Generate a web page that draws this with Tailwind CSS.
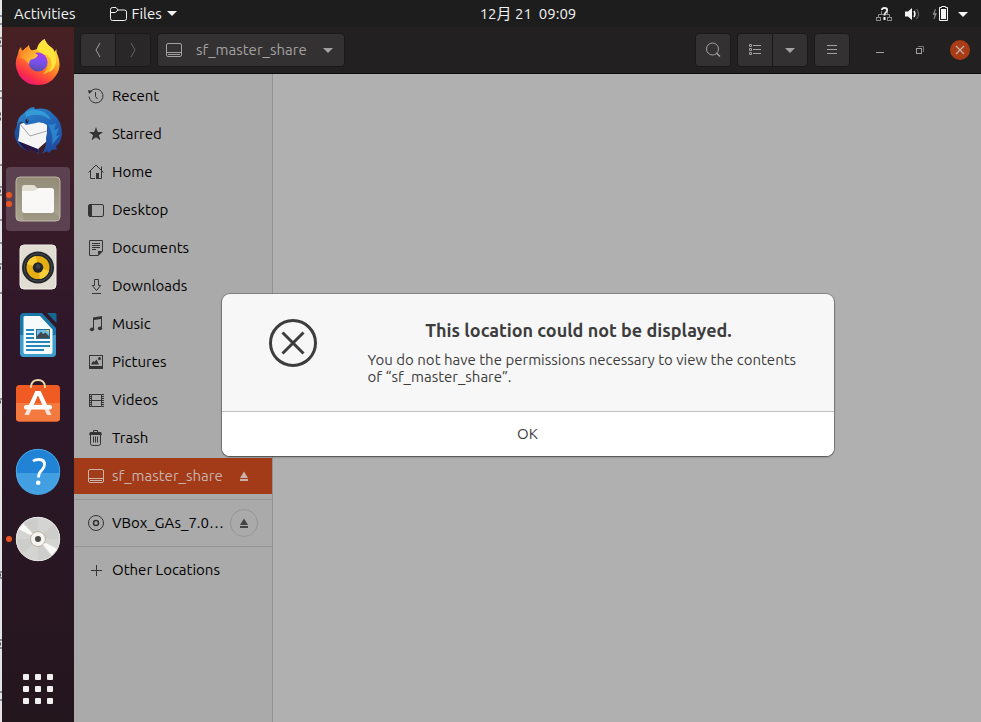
<!DOCTYPE html>
<html lang="en">
<head>
<meta charset="utf-8">
<meta name="viewport" content="width=device-width, initial-scale=1">
<title>Files</title>
<script src="https://cdn.jsdelivr.net/npm/@tailwindcss/browser@4"></script>
</head>
<body class="flex h-screen min-h-[722px] overflow-hidden bg-[#1d1d1d] font-['Ubuntu','Noto_Sans','Noto_Sans_CJK_SC',sans-serif] text-[15px] leading-5">

<!-- edge of the page behind the desktop -->
<svg class="h-full w-[2px] shrink-0 bg-[#e4e4e4]" viewBox="0 0 2 722" preserveAspectRatio="none" aria-hidden="true">
  <path stroke="#8d8d96" stroke-width="2" d="M0 16h2M0 24h2M0 38h2M0 46h2M0 91h2M0 98h2M0 165h2M0 187h2M0 195h2M0 220h2M0 243h2M0 264h2M0 293h2M0 399h2M0 572h2M0 578h2M0 640h2M0 648h2M0 692h2M0 700h2"/>
  <path stroke="#55555f" stroke-width="3" d="M0 42h1M0 114h1M0 119h1M0 191h1M0 268h1M0 402h1M0 575h1M0 644h1"/>
</svg>

<div class="flex min-w-0 flex-1 flex-col">

  <header class="grid h-[27px] shrink-0 grid-cols-[1fr_auto_1fr] items-center bg-[#1d1d1d] pl-3 pr-[13px] text-[#f2f2f2]">
    <div class="flex items-center gap-[34px]">
      <button type="button">Activities</button>
      <button type="button" class="flex items-center gap-[5px]">
        <svg class="h-4 w-[17px]" viewBox="0 0 17 16" fill="none" stroke="currentColor" aria-hidden="true"><path d="M.5 12.500V3.500Q.5 1.500 2.500 1.500H6L8 4H14.500Q16.500 4 16.500 6V12.500Q16.500 14.500 14.500 14.500H2.500Q.5 14.500 .5 12.500ZM1 6.500H5.500L8 4"/></svg>
        <span>Files</span>
        <svg class="h-[5px] w-[10px]" viewBox="0 0 10 5" fill="currentColor" aria-hidden="true"><path d="M0 0H10L5 5Z"/></svg>
      </button>
    </div>
    <time class="whitespace-pre pl-[74px]">12月 21  09:09</time>
    <button type="button" class="flex items-center justify-end" aria-label="System menu">
      <svg class="h-[18px] w-[92px]" viewBox="0 0 92 18" fill="none" aria-hidden="true">
        <g stroke="#8c8c8c" stroke-width="1"><rect x=".5" y="12.500" width="4" height="3"/><rect x="11.500" y="12.500" width="4" height="3"/><path d="M2.500 12V9.500H13.500V12M6 6.500H5.500V9M11.500 7V9.500"/></g>
        <path d="M5.800 5Q5.800 3 8.500 3T11.200 5.200Q11.200 6.200 9.800 7.400T8.500 10.500" stroke="#eee" stroke-width="1.800"/><rect x="7.500" y="12" width="2" height="3" fill="#fff"/>
        <path d="M29 6.500H32L36 3V15L32 11.500H29Z" fill="#f4f4f4"/><path d="M38 6Q40 9 38 12" stroke="#f4f4f4" stroke-width="1.500"/><path d="M40.500 4Q44.500 9 40.500 14" stroke="#777"/>
        <path d="M59.500 4L57 9.500H59L58 14L60.500 8.500H58.500Z" fill="#999" stroke="#999" stroke-width=".5"/>
        <path d="M65.500 1.500H69.500V2.500H71.500V15.500H63.500V2.500H65.500Z" stroke="#f4f4f4"/><rect x="65" y="4" width="5" height="10" fill="#f4f4f4"/>
        <path d="M82 7H92L87 12Z" fill="#f4f4f4"/>
      </svg>
    </button>
  </header>

  <div class="flex min-h-0 flex-1">

    <nav aria-label="Dock" class="flex w-[72px] shrink-0 flex-col items-center justify-between bg-linear-to-b from-[#472023] via-[#2e172a] via-45% to-[#24161d] pt-1 pb-px">
      <div class="flex flex-col gap-1">
        <button type="button" aria-label="Firefox" class="grid size-16 place-items-center">
          <svg class="size-12" viewBox="0 0 48 48" aria-hidden="true">
            <defs>
              <linearGradient id="ff1" x1=".8" y1="0" x2=".25" y2="1"><stop offset="0" stop-color="#fff44f"/><stop offset=".35" stop-color="#ffb32a"/><stop offset=".6" stop-color="#ff6a2a"/><stop offset=".85" stop-color="#fb2850"/><stop offset="1" stop-color="#e31587"/></linearGradient>
              <linearGradient id="ff2" x1=".6" y1="0" x2=".4" y2="1"><stop offset="0" stop-color="#a83be8"/><stop offset=".5" stop-color="#7a50f0"/><stop offset="1" stop-color="#5a4ba8"/></linearGradient>
              <linearGradient id="ff3" x1="0" y1="0" x2="1" y2=".6"><stop offset="0" stop-color="#ff7a20"/><stop offset="1" stop-color="#ffc43a"/></linearGradient>
            </defs>
            <path fill="url(#ff1)" d="M30.500 0Q32 5 38 9Q40 10 40.500 13L42.500 10Q42 14 44 17Q48 28 42 36.500Q36 46 24 46Q11 46 5 36Q-1 26 4 15Q4 11 7 8Q7 11 9 12L15 6Q15 9 17 11Q20 11.500 23 10Q24 4 30.500 0Z"/>
            <path fill="#ffe43c" d="M30.500 0Q32 5 38 9Q43 16 42 24Q40 31 35 33Q38 23 31 16Q25 13 23 11Q24 4 30.500 0Z"/>
            <path fill="#ffb52c" d="M32 15Q38 19 37.500 27Q36 34 29 35Q35 29 34 22Z"/>
            <circle cx="24" cy="23" r="9.500" fill="url(#ff2)"/>
            <path fill="url(#ff3)" d="M6 19Q7 10 15 7Q15 11 19 13L24 16Q22 20 17 20.500Q15 22 15 25Q9 18 6 19Z"/>
          </svg>
        </button>
        <button type="button" aria-label="Thunderbird" class="grid size-16 place-items-center">
          <svg class="size-12" viewBox="0 0 48 48" aria-hidden="true">
            <defs><linearGradient id="tb1" x1=".2" y1="0" x2=".7" y2="1"><stop offset="0" stop-color="#2d86cc"/><stop offset=".5" stop-color="#2264b8"/><stop offset="1" stop-color="#204a9c"/></linearGradient></defs>
            <path fill="#1c4f9c" d="M5 15Q-2 25 2 33Q5 41 16 45L13 39Q21 44 25 47L25 35L8 20Z"/>
            <path fill="#251344" d="M4 33L24 42L25 46L14 41L16 45Q8 42 4 33Z"/>
            <path fill="#f5f5f5" d="M6 17L16 14L33 16L33 34L24 42L4 34L5 29Z"/>
            <path fill="url(#tb1)" d="M3 21Q2 11 10 6Q15 0 20 0L21 2Q33 0 39 7Q48 14 48 27Q47 36 42 39L43 43Q38 41 35 46L33 44L28 47Q33 39 32 31Q34 24 33 18Q27 14 22 16L12 18Q9 14 5 16Z"/>
            <path fill="#359bd6" d="M11 6Q17 1 22 3Q32 3 37 13L30 9Q20 6 12 10Z"/>
            <path fill="#2c83cc" d="M34 17Q38 19 42 16L40 23L45 21L42 29L46 28L38 38Q40 28 34 17Z"/>
            <path d="M6 17L16 29L33 24" fill="none" stroke="#a6a6ac"/><ellipse cx="13" cy="14" rx="1.500" ry="2.200" fill="#15264d"/><circle cx="13.500" cy="13" r=".6" fill="#d5a24c"/>
          </svg>
        </button>
        <button type="button" aria-label="Files" aria-current="true" class="relative grid size-16 place-items-center rounded bg-[#5c4251]">
          <svg class="size-12" viewBox="0 0 48 48" aria-hidden="true">
            <defs><linearGradient id="fi1" x1="0" y1="0" x2="0" y2="1"><stop offset="0" stop-color="#938b78"/><stop offset="1" stop-color="#aaa491"/></linearGradient></defs>
            <rect x="2" y="2" width="44" height="44" rx="4" fill="url(#fi1)" stroke="#b9b4a4"/>
            <path fill="#807963" opacity=".3" d="M8 37L40 37L45 42V45H10Z"/>
            <path fill="#e3dfd3" d="M8 12.500Q8 10 10.500 10H19.500Q21 10 22 12L24 14V18H8Z"/>
            <path fill="#f9f8f6" d="M8 16H19Q21 16 22 14.500T25 13H37.500Q40 13 40 15.500V35.500Q40 38 37.500 38H10.500Q8 38 8 35.500Z"/>
          </svg>
          <span class="absolute left-0 top-[25px] flex flex-col gap-[3px]"><i class="size-[6px] rounded-full bg-[#e95420]"></i><i class="size-[6px] rounded-full bg-[#e95420]"></i></span>
        </button>
        <button type="button" aria-label="Rhythmbox" class="grid size-16 place-items-center">
          <svg class="size-12" viewBox="0 0 48 48" aria-hidden="true">
            <rect x="6" y="2" width="36" height="44" rx="4" fill="#e1ddd2" stroke="#f3f0ea"/>
            <circle cx="24" cy="24.500" r="16" fill="#23272b"/><circle cx="24" cy="24.500" r="13.800" fill="none" stroke="#454b50"/>
            <circle cx="24" cy="24.500" r="11.500" fill="#e5af13"/><path fill="#f8cd3a" d="M24 24.500L13 21A11.500 11.500 0 0 1 22 13ZM24 24.500L35 28A11.500 11.500 0 0 1 26 36Z"/>
            <circle cx="24" cy="24.500" r="5.200" fill="#202427"/><circle cx="24" cy="23.500" r="2.500" fill="#3c4145"/>
          </svg>
        </button>
        <button type="button" aria-label="LibreOffice Writer" class="grid size-16 place-items-center">
          <svg class="size-12" viewBox="0 0 48 48" aria-hidden="true">
            <path fill="#1a78a9" d="M10 2H28L42 17V42Q42 46 38 46H10Q6 46 6 42V6Q6 2 10 2Z"/>
            <path fill="#3d9dcc" d="M6 24H42V42Q42 46 38 46H10Q6 46 6 42Z"/>
            <path fill="#f7fafb" d="M11 5H26L38.500 18.500V41Q38.500 43 36.500 43H11Q9.500 43 9.500 41V6.500Q9.500 5 11 5Z"/>
            <path fill="#176795" d="M33 2H41Q42.500 2 42.500 3.500V12Z"/>
            <path stroke="#2387bc" stroke-width="2" d="M12 19H20M12 23H20M12 27H20M12 31H36M12 35H36M12 39H30"/>
            <rect x="22.500" y="18.500" width="13" height="9" fill="#70bde5" stroke="#286e94"/><path fill="#404a50" d="M23 27V25L27 20.500L29 23L31.500 21.500L35 25V27Z"/><path fill="#f1c442" d="M32 19H35V22Z"/>
          </svg>
        </button>
        <button type="button" aria-label="Ubuntu Software" class="grid size-16 place-items-center">
          <svg class="size-12" viewBox="0 0 48 48" aria-hidden="true">
            <rect x="2" y="6" width="44" height="36.500" rx="3.500" fill="#f05b24"/><path fill="#f4793f" d="M2 24H46V39Q46 42.500 42.500 42.500H5.500Q2 42.500 2 39Z"/>
            <path d="M17 9V7Q18 1 24 1T31 7V9" fill="none" stroke="#efd9a7" stroke-width="1.800"/>
            <path fill="#fbe3da" d="M21.500 12H26.500L37.500 36H33L24 16L15 36H10.500Z"/><path fill="#fff" d="M21.500 12H26.500L33 26H28.500L24 16L19.500 26H15Z"/><rect x="10" y="26" width="28" height="4.500" rx="2.200" fill="#fff"/>
          </svg>
        </button>
        <button type="button" aria-label="Help" class="grid size-16 place-items-center">
          <svg class="size-12" viewBox="0 0 48 48" aria-hidden="true">
            <circle cx="24" cy="24" r="22" fill="#2183d6"/><path fill="#42a0e2" d="M2 26H46A22 22 0 0 1 2 26Z"/><circle cx="24" cy="24" r="21.700" fill="none" stroke="#4ba5e4"/>
            <path d="M19 14Q21 12.500 25 12.500Q30.500 12.500 30.500 17.500Q30.500 20.500 27.500 23.500Q24.500 26 24.500 30.500" fill="none" stroke="#fff" stroke-width="2.800"/><circle cx="24.200" cy="35.700" r="2.300" fill="#fff"/>
          </svg>
        </button>
        <button type="button" aria-label="VBox_GAs disc" class="relative grid size-16 place-items-center">
          <svg class="size-12" viewBox="0 0 48 48" aria-hidden="true">
            <circle cx="24" cy="24" r="22" fill="#d4d4d3"/><path fill="#cdcdcc" d="M24 24L24 2A22 22 0 0 0 10 7ZM24 24L2 24A22 22 0 0 0 8 39ZM24 24L24 46A22 22 0 0 0 37 42ZM24 24L46 24A22 22 0 0 0 40 9Z"/>
            <path fill="#f9f9f8" d="M24 24L4.500 14L9 8.500ZM24 24L43.500 34L38 40.500Z"/><circle cx="24" cy="24" r="21.700" fill="none" stroke="#e3e3e1"/>
            <circle cx="24" cy="24" r="7.500" fill="#f5f4f1" stroke="#b9b3a0"/><circle cx="24" cy="24" r="3" fill="#4a4a4a"/>
          </svg>
          <i class="absolute left-0 top-[29px] size-[6px] rounded-full bg-[#e95420]"></i>
        </button>
      </div>
      <button type="button" aria-label="Show Applications" class="grid size-16 place-items-center">
        <span class="grid grid-cols-3 gap-[6px]">
          <i class="size-[6px] rounded-[1px] bg-[#f2f0ef]"></i><i class="size-[6px] rounded-[1px] bg-[#f2f0ef]"></i><i class="size-[6px] rounded-[1px] bg-[#f2f0ef]"></i>
          <i class="size-[6px] rounded-[1px] bg-[#f2f0ef]"></i><i class="size-[6px] rounded-[1px] bg-[#f2f0ef]"></i><i class="size-[6px] rounded-[1px] bg-[#f2f0ef]"></i>
          <i class="size-[6px] rounded-[1px] bg-[#f2f0ef]"></i><i class="size-[6px] rounded-[1px] bg-[#f2f0ef]"></i><i class="size-[6px] rounded-[1px] bg-[#f2f0ef]"></i>
        </span>
      </button>
    </nav>

    <section aria-label="Files window" class="relative flex min-w-0 flex-1 flex-col bg-[#b0b0b0]">

      <div class="flex h-[47px] shrink-0 items-center gap-[6px] border-b border-[#0c0b0b] bg-[#232021] pl-[6px] pr-px text-[#a3a1a1]">
        <div class="flex h-[34px] w-[71px] divide-x divide-[#1a1818] overflow-hidden rounded border border-[#1a1818]">
          <button type="button" aria-label="Back" class="grid flex-1 place-items-center bg-[#343132]"><svg class="size-4" viewBox="0 0 16 16" fill="none" stroke="currentColor" aria-hidden="true"><path d="M10 1L6 8L10 15"/></svg></button>
          <button type="button" aria-label="Forward" class="grid flex-1 place-items-center bg-[#2a2728] text-[#676465]"><svg class="size-4" viewBox="0 0 16 16" fill="none" stroke="currentColor" aria-hidden="true"><path d="M6 1L10 8L6 15"/></svg></button>
        </div>
        <button type="button" class="flex h-[34px] items-center rounded border border-[#1a1818] bg-[#343132] pl-2 pr-[11px]">
          <svg class="h-4 w-4" viewBox="0 0 16 16" fill="none" stroke="currentColor" aria-hidden="true"><rect x=".5" y="1.500" width="15" height="13" rx="1.500"/><path d="M1 10.500H15M2 12.500H14"/></svg>
          <span class="pl-[14px] pr-4 text-left">sf_master_share</span>
          <svg class="h-[5px] w-[10px]" viewBox="0 0 10 5" fill="currentColor" aria-hidden="true"><path d="M0 0H10L5 5Z"/></svg>
        </button>
        <div class="flex-1"></div>
        <button type="button" aria-label="Search" class="grid h-[34px] w-9 place-items-center rounded border border-[#1a1818] bg-[#343132]"><svg class="size-4" viewBox="0 0 16 16" fill="none" stroke="currentColor" aria-hidden="true"><circle cx="7.500" cy="7" r="6"/><path stroke-width="1.500" d="M11.500 11L15 14.500"/></svg></button>
        <div class="flex h-[34px] w-[71px] divide-x divide-[#1a1818] overflow-hidden rounded border border-[#1a1818] bg-[#343132]">
          <button type="button" aria-label="List view" class="grid flex-1 place-items-center"><svg class="h-4 w-3" viewBox="0 0 12 16" fill="none" stroke="currentColor" aria-hidden="true"><path d="M.5 2.500h2v2h-2zM.5 6.500h2v2h-2zM.5 10.500h2v2h-2zM4 3.500h8M4 7.500h8M4 11.500h8"/></svg></button>
          <button type="button" aria-label="View options" class="grid flex-1 place-items-center"><svg class="h-[5px] w-[10px]" viewBox="0 0 10 5" fill="currentColor" aria-hidden="true"><path d="M0 0H10L5 5Z"/></svg></button>
        </div>
        <button type="button" aria-label="Menu" class="grid h-[34px] w-9 place-items-center rounded border border-[#1a1818] bg-[#343132]"><svg class="h-4 w-[10px]" viewBox="0 0 10 16" fill="none" stroke="currentColor" aria-hidden="true"><path d="M0 3.500h10M0 7.500h10M0 11.500h10"/></svg></button>
        <div class="ml-1 flex">
          <button type="button" aria-label="Minimize" class="grid size-10 place-items-center"><svg class="size-4" viewBox="0 0 16 16" stroke="currentColor" aria-hidden="true"><path d="M4 10.500h8"/></svg></button>
          <button type="button" aria-label="Restore" class="grid size-10 place-items-center"><svg class="size-4" viewBox="0 0 16 16" fill="none" stroke="currentColor" aria-hidden="true"><rect x="4.500" y="6.500" width="5" height="5"/><path stroke="#777475" d="M6 4.500H11.500V10"/></svg></button>
          <button type="button" aria-label="Close" class="grid size-10 place-items-center"><svg class="size-5" viewBox="0 0 20 20" stroke="#c4b0a9" aria-hidden="true"><circle cx="10" cy="10" r="10" fill="#a83c17" stroke="none"/><path stroke-width="1.300" d="M6 6L14 14M14 6L6 14"/></svg></button>
        </div>
      </div>

      <div class="flex min-h-0 flex-1">
        <aside class="flex w-[199px] shrink-0 flex-col border-r border-[#939393] bg-[#aaaaaa] pt-1 text-black">
          <ul class="flex flex-col gap-[2px] pb-[5px]">
            <li><a href="#recent" class="flex h-9 items-center gap-2 px-[14px]"><svg class="size-4 text-[#343434]" viewBox="0 0 16 16" fill="none" stroke="currentColor" aria-hidden="true"><path d="M2.200 4A7 7 0 1 1 1 8.500M7.500 4V8.500L9.500 11"/><path fill="currentColor" stroke="none" d="M0 2L4.500 3L1 6Z"/></svg>Recent</a></li>
            <li><a href="#starred" class="flex h-9 items-center gap-2 px-[14px]"><svg class="size-4 text-[#343434]" viewBox="0 0 16 16" fill="currentColor" aria-hidden="true"><path d="M8 1L9.800 6H15L10.900 9.200L12.400 14.300L8 11.300L3.600 14.300L5.100 9.200L1 6H6.200Z"/></svg>Starred</a></li>
            <li><a href="#home" class="flex h-9 items-center gap-2 px-[14px]"><svg class="size-4 text-[#343434]" viewBox="0 0 16 16" fill="none" stroke="currentColor" aria-hidden="true"><path d="M.5 8.500L8 1L15.500 8.500M2.500 7V14.500H7M13.500 7V14.500H11M13.500 6V2.500"/><path fill="currentColor" stroke="none" d="M8 9h3v6H8z"/></svg>Home</a></li>
            <li><a href="#desktop" class="flex h-9 items-center gap-2 px-[14px]"><svg class="size-4 text-[#343434]" viewBox="0 0 16 16" fill="none" stroke="currentColor" aria-hidden="true"><rect x=".5" y="2.500" width="15" height="12" rx="1.500"/><path fill="currentColor" stroke="none" d="M1 2h3v13H1z"/></svg>Desktop</a></li>
            <li><a href="#documents" class="flex h-9 items-center gap-2 px-[14px]"><svg class="size-4 text-[#343434]" viewBox="0 0 16 16" fill="none" stroke="currentColor" aria-hidden="true"><path d="M1.500 .5H14.500V11L10 15.500H1.500ZM4 3.500H12M4 5.500H12M4 7.500H12M4 9.500H8"/><path fill="currentColor" stroke="none" d="M10 11H15L10 16Z"/></svg>Documents</a></li>
            <li><a href="#downloads" class="flex h-9 items-center gap-2 px-[14px]"><svg class="size-4 text-[#343434]" viewBox="0 0 16 16" fill="none" stroke="currentColor" aria-hidden="true"><path d="M6.500 1.500H10.500V7.500H12.700L8.500 12.500L4.300 7.500H6.500ZM4 15.500H13"/></svg>Downloads</a></li>
            <li><a href="#music" class="flex h-9 items-center gap-2 px-[14px]"><svg class="size-4 text-[#343434]" viewBox="0 0 16 16" fill="currentColor" aria-hidden="true"><path d="M5 1.500L14 0V12.500H13V3L6 4V14H5Z"/><ellipse cx="4" cy="13.300" rx="2.100" ry="1.900"/><ellipse cx="12" cy="12.300" rx="2.100" ry="1.900"/></svg>Music</a></li>
            <li><a href="#pictures" class="flex h-9 items-center gap-2 px-[14px]"><svg class="size-4 text-[#343434]" viewBox="0 0 16 16" fill="currentColor" aria-hidden="true"><path fill-rule="evenodd" d="M1 1H15V15H1ZM2 2V12H14V2Z"/><path d="M3 10.500L5 7L6.500 8L8.500 5.500L11 10.500Z"/><circle cx="11.500" cy="4.500" r="1.500"/></svg>Pictures</a></li>
            <li><a href="#videos" class="flex h-9 items-center gap-2 px-[14px]"><svg class="size-4 text-[#343434]" viewBox="0 0 16 16" fill="none" stroke="currentColor" aria-hidden="true"><path d="M3.500 2.500H13.500V14.500H3.500ZM3.500 8.500H13.500"/><path stroke-width="2" stroke-dasharray="1 1" d="M2 2V15M15 2V15"/><path d="M1.500 2V15"/></svg>Videos</a></li>
            <li><a href="#trash" class="flex h-9 items-center gap-2 px-[14px]"><svg class="size-4 text-[#343434]" viewBox="0 0 16 16" fill="none" stroke="currentColor" aria-hidden="true"><path d="M2.500 5V13.500Q2.500 15.500 4.500 15.500H10.500Q12.500 15.500 12.500 13.500V5M5.500 6.500V12.500M7.500 6.500V12.500M9.500 6.500V12.500M5.500 2V.5H9.500V2"/><path fill="currentColor" stroke="none" d="M2 2H13L14 5H1Z"/></svg>Trash</a></li>
            <li class="flex h-9 items-center bg-[#a33a18] px-[14px] text-[#c8b3ac]"><a href="#share" aria-current="page" class="flex min-w-0 flex-1 items-center gap-2"><svg class="size-4 shrink-0" viewBox="0 0 16 16" fill="none" stroke="currentColor" aria-hidden="true"><rect x=".5" y="1.500" width="15" height="13" rx="1.500"/><path d="M1 10.500H15M2 12.500H14"/></svg><span>sf_master_share</span></a><button type="button" aria-label="Eject sf_master_share" class="grid size-7 shrink-0 place-items-center"><svg class="size-4" viewBox="0 0 16 16" fill="currentColor" aria-hidden="true"><path d="M8 3.500L12 10H4ZM4 11H12V13H4Z"/></svg></button></li>
          </ul>
          <div class="border-y border-[#969696] py-[5px]">
            <div class="flex h-9 items-center px-[14px]"><a href="#disc" class="flex min-w-0 flex-1 items-center gap-2"><svg class="size-4 shrink-0 text-[#343434]" viewBox="0 0 16 16" fill="none" stroke="currentColor" aria-hidden="true"><circle cx="8" cy="8" r="7.500"/><circle cx="8" cy="8" r="2.500" stroke-width="1.500"/></svg><span class="whitespace-nowrap">VBox_GAs_7.0…</span></a><button type="button" aria-label="Eject VBox_GAs" class="grid size-7 shrink-0 place-items-center rounded-full border border-[#969696] text-[#444]"><svg class="size-4" viewBox="0 0 16 16" fill="currentColor" aria-hidden="true"><path d="M8 3.500L12 10H4ZM4 11H12V13H4Z"/></svg></button></div>
          </div>
          <a href="#other" class="mt-[5px] flex h-9 items-center gap-2 px-[14px]"><svg class="size-4 text-[#343434]" viewBox="0 0 16 16" stroke="currentColor" aria-hidden="true"><path d="M8.500 3V14M3 8.500H14"/></svg>Other Locations</a>
        </aside>
        <main class="flex-1"></main>
      </div>

      <div class="absolute inset-0 grid place-items-center pt-px">
        <div role="alertdialog" aria-labelledby="dlg-title" aria-describedby="dlg-text" class="w-[612px] max-w-full overflow-hidden rounded-lg bg-[#f7f7f7] text-[#3d3d3d] shadow-[0_0_0_1px_rgba(0,0,0,0.22),0_1px_2px_rgba(0,0,0,0.45)]">
          <div class="flex items-start gap-[51px] pl-[47px] pr-11 pt-[25px] pb-[26px]">
            <svg class="size-12 shrink-0" viewBox="0 0 48 48" fill="none" stroke="currentColor" stroke-width="3" aria-hidden="true"><circle cx="24" cy="24" r="22.500"/><path d="M13.500 13.500L34.500 34.500M34.500 13.500L13.500 34.500"/></svg>
            <div class="min-w-0 flex-1">
              <h1 id="dlg-title" class="text-center text-lg font-bold leading-[22px]">This location could not be displayed.</h1>
              <p id="dlg-text" class="mt-[10px] whitespace-nowrap leading-[17px]">You do not have the permissions necessary to view the contents<br>of “sf_master_share”.</p>
            </div>
          </div>
          <button type="button" class="h-[45px] w-full border-t border-[#c0c0c0] bg-white">OK</button>
        </div>
      </div>
    </section>
  </div>
</div>
</body>
</html>
